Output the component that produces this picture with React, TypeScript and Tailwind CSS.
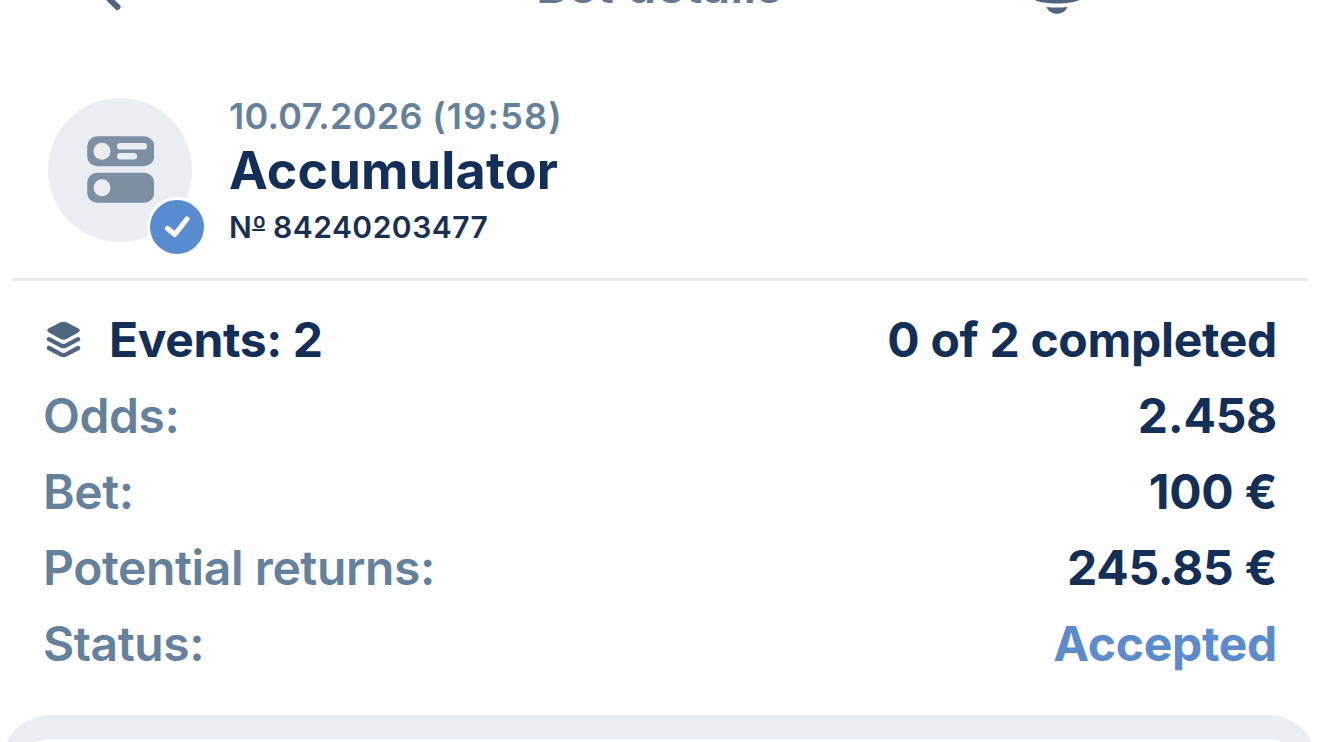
import type { ReactNode } from "react";
import clsx from "clsx";

export default function App() {
    return (
        <main className="flex h-[742px] w-[1319px] flex-col overflow-hidden bg-[#fefefe] font-['Inter',sans-serif] text-[#132e57]">
            <Header />
            <BetSummary />
            <hr className="mx-3 mr-[11px] h-[3px] shrink-0 border-0 bg-[#e8eaed]" />
            <BetInfo />
            <div className="mx-px mt-[33px] h-[200px] shrink-0 rounded-t-[50px] bg-[#eaedf2] px-3 pt-6">
                <div className="h-full rounded-t-[38px] bg-[#fefefe]"></div>
            </div>
        </main>
    )
}

const Header = () => {
    return <header className="-mt-[62px] grid h-24 shrink-0 grid-cols-[1fr_auto_1fr] items-center">
        <button className="pl-[88px]" aria-label="Back">
            <svg width="36" height="52" viewBox="0 0 36 52" fill="none" stroke="#50657f" strokeWidth="6" strokeLinecap="round" strokeLinejoin="round">
                <path d="M29.5 47 8 26 29.5 5" />
            </svg>
        </button>
        <h1 className="text-[48px] leading-none font-semibold tracking-[0.3px] text-[#64788f]">Bet details</h1>
        <button className="justify-self-end pr-[232px]" aria-label="Notifications">
            <svg width="60" height="56" viewBox="0 0 60 56" fill="#50657f">
                <path d="M30 0C18 0 12 9 11 20c-1 9-7 12-7 18 0 5 13 7.500 26 7.500s26-2.500 26-7.500c0-6-6-9-7-18C48 9 42 0 30 0Z" />
                <path d="M19.500 49q10.500 1 21 0c-1.500 4-6 6.800-10.500 6.800S21 53 19.500 49Z" />
            </svg>
        </button>
    </header>
}

const BetSummary = () => {
    return <section className="flex h-[244px] shrink-0 gap-[37px] pt-16 pl-12">
        <div className="relative flex h-36 w-36 items-center justify-center rounded-full bg-[#eaedf2]">
            <svg width="68" height="68" viewBox="0 0 68 68" fill="#7d90a3">
                <rect x="1.200" y="0.200" width="67" height="30" rx="10" />
                <rect x="1.200" y="36.800" width="67" height="30" rx="10" />
                <g fill="#eaedf2">
                    <circle cx="16" cy="15.200" r="8.500" />
                    <circle cx="16" cy="51.800" r="8.500" />
                    <rect x="31" y="7" width="30" height="6.500" rx="3.250" />
                    <rect x="31" y="17" width="20" height="6.500" rx="3.250" />
                </g>
            </svg>
            <span className="absolute top-[99px] left-[99px] flex h-[60px] w-[60px] items-center justify-center rounded-full border-3 border-[#fefefe] bg-[#598ccf]">
                <svg width="26" height="22" viewBox="0 0 26 22" fill="none" stroke="#fefefe" strokeWidth="5" strokeLinecap="round" strokeLinejoin="round">
                    <path d="M3.500 12.500 10.800 18.500 23 3" />
                </svg>
            </span>
        </div>
        <div className="flex flex-col">
            <span className="h-[38px] text-[36px] leading-[37px] font-semibold tracking-[0.300px] text-[#64809b]">
                10.07.2026 <span className="tracking-[1.200px]">(19:58)</span>
            </span>
            <h2 className="h-[70px] text-[52px] leading-[70px] font-bold tracking-[0.200px]">Accumulator</h2>
            <span className="text-[30px] leading-[43px] font-semibold tracking-[0.500px] text-[#1a3050]">
                N<span className="tracking-[-1.500px] underline decoration-2 underline-offset-[-9px] [text-decoration-skip-ink:none]">º</span> 84240203477
            </span>
        </div>
    </section>
}

const BetInfo = () => {
    return <section className="mt-[21px] flex shrink-0 flex-col pr-[42px] pl-[43px]">
        <Row
            label={
                <span className="flex items-center font-bold tracking-[-0.400px] text-[#132e57]">
                    <LayersIcon />
                    <span className="ml-[27px]">Events: 2</span>
                </span>
            }
            value="0 of 2 completed"
        />
        <Row label="Odds:" value="2.458" />
        <Row label="Bet:" value="100 €" />
        <Row label="Potential returns:" value="245.85 €" />
        <Row label="Status:" value="Accepted" valueClass="text-[#5b8bcb]" />
    </section>
}

const Row = ({ label, value, valueClass }: { label: ReactNode; value: string; valueClass?: string }) => {
    return <div className="flex h-[76px] items-center justify-between text-[48px] leading-none">
        <span className="font-semibold tracking-[-0.400px] text-[#65809b]">{label}</span>
        <span className={clsx("font-bold tracking-[-0.300px]", valueClass)}>{value}</span>
    </div>
}

const LayersIcon = () => {
    return <svg className="ml-[3px]" width="36" height="38" viewBox="0 0 36 38" fill="#50657f">
        <path d="M14.500 1.300Q17.500.2 20.500 1.300L32 7.200Q35.500 9.400 32 11.600L20.500 17.900Q17.500 19.400 14.500 17.900L3 11.600Q-.5 9.400 3 7.200Z" />
        <g fill="none" stroke="#50657f" strokeWidth="4.300" strokeLinecap="round" strokeLinejoin="round">
            <path d="M2.900 18.200 15.300 24.700Q17.500 25.700 19.700 24.700L32.100 18.200" />
            <path d="M2.900 27 15.300 33.600Q17.500 34.600 19.700 33.600L32.100 27" />
        </g>
    </svg>
}
